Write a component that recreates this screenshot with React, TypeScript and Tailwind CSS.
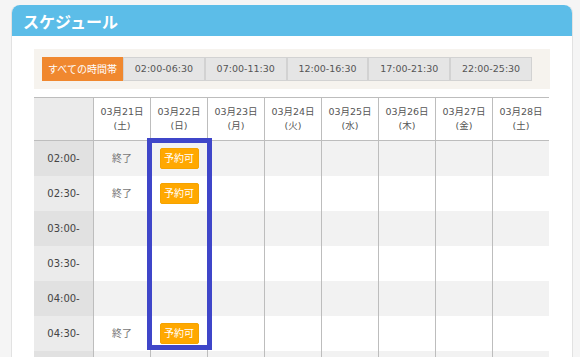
import React from "react";

const days = [
  ["03月21日", "(土)"],
  ["03月22日", "(日)"],
  ["03月23日", "(月)"],
  ["03月24日", "(火)"],
  ["03月25日", "(水)"],
  ["03月26日", "(木)"],
  ["03月27日", "(金)"],
  ["03月28日", "(土)"],
];

const tabs = ["02:00-06:30", "07:00-11:30", "12:00-16:30", "17:00-21:30", "22:00-25:30"];

type Row = { time: string; cells: (string | null)[] };
const rows: Row[] = [
  { time: "02:00-", cells: ["終了", "予約可", null, null, null, null, null, null] },
  { time: "02:30-", cells: ["終了", "予約可", null, null, null, null, null, null] },
  { time: "03:00-", cells: [null, null, null, null, null, null, null, null] },
  { time: "03:30-", cells: [null, null, null, null, null, null, null, null] },
  { time: "04:00-", cells: [null, null, null, null, null, null, null, null] },
  { time: "04:30-", cells: ["終了", "予約可", null, null, null, null, null, null] },
  { time: "", cells: [null, null, null, null, null, null, null, null] },
];

export default function App() {
  return (
    <div
      className="h-[357px] bg-[#f5f5f5] pt-[5px] pl-[11px] pr-[7px] overflow-hidden"
      style={{ fontFamily: '"DejaVu Sans", "Noto Sans CJK JP", sans-serif' }}
    >
      <div className="rounded-t-[8px] border-x border-[#e2e2e2] bg-white h-[400px]">
        <div className="h-[31px] rounded-t-[8px] bg-[#5cbde8] flex items-center pl-[11px]">
          <span
            className="text-white text-[16px] font-bold leading-none"
            style={{ fontFamily: '"Noto Sans CJK JP", sans-serif' }}
          >
            スケジュール
          </span>
        </div>
        <div className="pl-[22px] pt-[13px]">
          <div className="w-[516px] h-[40px] bg-[#f6f3ee] pl-[8px] pr-[18px] py-[8px] flex">
            <div className="w-[81px] shrink-0 h-[24px] bg-[#f0882f] text-white text-[10px] whitespace-nowrap flex items-center justify-center">
              すべての時間帯
            </div>
            {tabs.map((t) => (
              <div
                key={t}
                className="flex-1 h-[24px] bg-[#e5e5e5] border border-[#d2d2d2] text-[#555] text-[9.5px] whitespace-nowrap flex items-center justify-center"
              >
                {t}
              </div>
            ))}
          </div>

          <div className="relative mt-[8px] w-[515px]">
            <div className="grid grid-cols-[59px_repeat(8,57px)] border-t border-r border-[#bdbdbd]">
              <div className="h-[43px] bg-[#ebebeb] border-b border-[#bdbdbd]" />
              {days.map(([d, w]) => (
                <div
                  key={d}
                  className="h-[43px] bg-white border-l border-b border-[#bdbdbd] flex flex-col items-center justify-center text-[9.5px] leading-[14px] text-[#555]"
                >
                  <span>{d}</span>
                  <span>{w}</span>
                </div>
              ))}
              {rows.map((r, i) => {
                const odd = i % 2 === 0;
                return (
                  <React.Fragment key={i}>
                    <div
                      className={`h-[35px] flex items-center justify-center text-[10px] text-[#444] ${
                        odd ? "bg-[#e1e1e1]" : "bg-[#ebebeb]"
                      }`}
                    >
                      {r.time}
                    </div>
                    {r.cells.map((c, j) => (
                      <div
                        key={j}
                        className={`h-[35px] border-l border-[#bdbdbd] flex items-center justify-center ${
                          odd ? "bg-[#f2f2f2]" : "bg-white"
                        }`}
                      >
                        {c === "終了" && <span className="text-[10px] text-[#777]">終了</span>}
                        {c === "予約可" && (
                          <span className="w-[39px] h-[21px] rounded-[2px] bg-[#ffa800] border border-[#f5a300] text-white text-[10px] flex items-center justify-center">
                            予約可
                          </span>
                        )}
                      </div>
                    ))}
                  </React.Fragment>
                );
              })}
            </div>
            <div className="absolute left-[113px] top-[41px] w-[65px] h-[212px] border-[5px] border-[#3f46c9]" />
          </div>
        </div>
      </div>
    </div>
  );
}
